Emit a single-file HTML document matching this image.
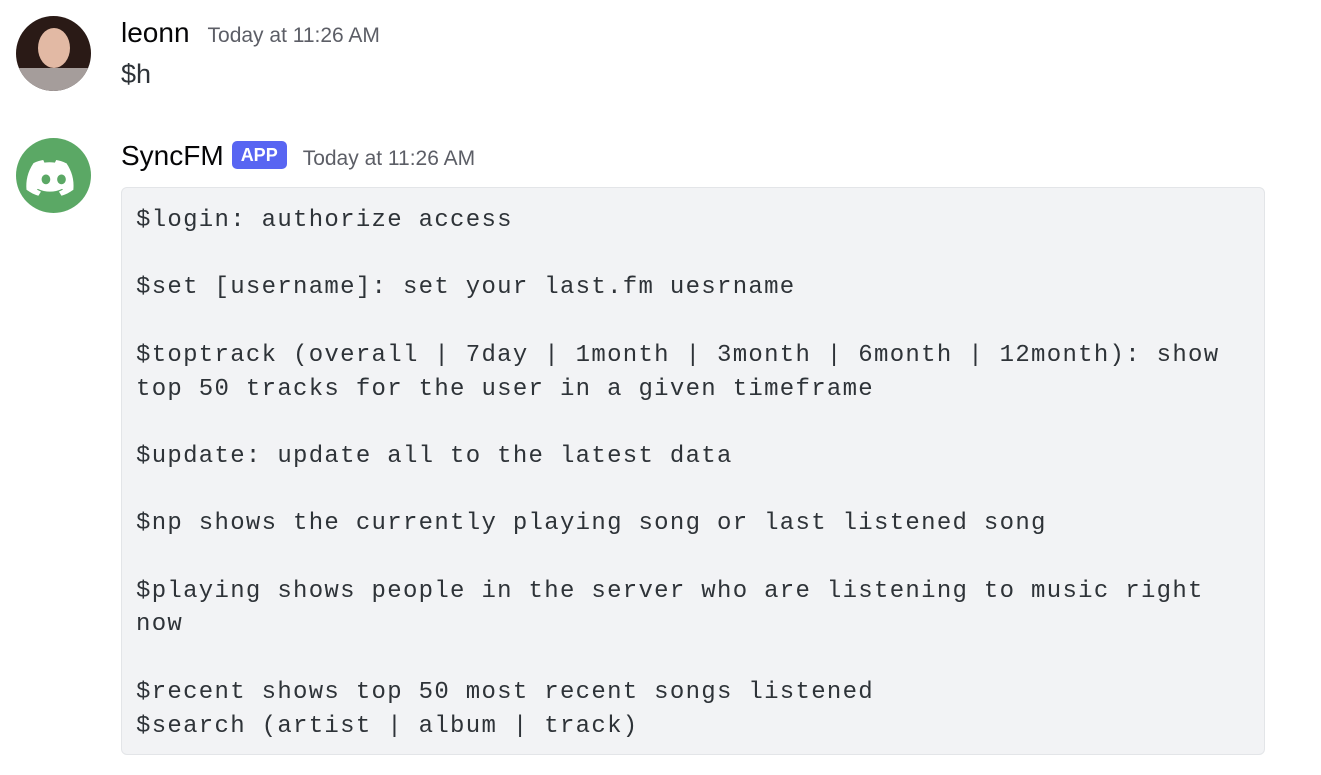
<!DOCTYPE html>
<html><head><meta charset="utf-8"><style>
body{margin:0;width:1321px;height:775px;background:#fff;font-family:"Liberation Sans",sans-serif;position:relative;overflow:hidden}
.av{position:absolute;left:16px;width:75px;height:75px;border-radius:50%;overflow:hidden}
.name{position:absolute;left:121px;font-size:28px;color:#060607;white-space:nowrap}
.ts{font-size:21px;color:#5c5e66;margin-left:18px}
.app{display:inline-block;background:#5865f2;color:#fff;font-size:18px;font-weight:bold;padding:0 9px;border-radius:5px;vertical-align:4px;margin-left:8px;line-height:28px}
.code{position:absolute;left:121px;top:187px;width:1144px;height:568px;background:#f2f3f5;border:1px solid #e3e5e8;border-radius:6px;box-sizing:border-box}
pre{margin:0;position:absolute;left:14px;top:16px;font-family:"Liberation Mono",monospace;font-size:24px;letter-spacing:1.3px;line-height:33.7px;color:#2e3338}
</style></head><body>
<div class="av" style="top:16px;background:#2a1a16;">
<div style="position:absolute;left:22px;top:12px;width:32px;height:40px;border-radius:50%;background:#e2b9a4"></div>
<div style="position:absolute;left:0;top:52px;width:75px;height:30px;background:#a59d9b"></div>
</div>
<div class="name" style="top:17px">leonn<span class="ts">Today at 11:26 AM</span></div>
<div style="position:absolute;left:121px;top:59px;font-size:27px;color:#2e3338">$h</div>
<div class="av" style="top:138px;background:#5ba865;">
<svg width="75" height="75" viewBox="0 0 75 75"><g transform="translate(37.5,37.5) scale(1.08) translate(-37.5,-38.5)"><path fill="#fff" d="M49 27c-3-1.4-6-2.3-9-2.8l-1.2 2.4c-3.3-.5-6.5-.5-9.7 0L28 24.2c-3 .5-6 1.4-9 2.8-5.7 8.4-7.2 16.6-6.5 24.7 3.8 2.8 7.4 4.5 11 5.6l2.4-3.9c-1.3-.5-2.6-1.1-3.8-1.8l.9-.7c7.3 3.4 15.2 3.4 22.4 0l.9.7c-1.2.7-2.5 1.3-3.8 1.8l2.4 3.9c3.6-1.1 7.2-2.8 11-5.6.9-9.4-1.6-17.6-6.5-24.7zM30.5 46.6c-2.2 0-4-2-4-4.5s1.8-4.5 4-4.5 4 2 4 4.5-1.8 4.5-4 4.5zm14.4 0c-2.2 0-4-2-4-4.5s1.8-4.5 4-4.5 4 2 4 4.5-1.8 4.5-4 4.5z"/></g></svg></div>
<div class="name" style="top:140px">SyncFM<span class="app">APP</span><span class="ts" style="margin-left:16px">Today at 11:26 AM</span></div>
<div class="code"><pre>$login: authorize access

$set [username]: set your last.fm uesrname

$toptrack (overall | 7day | 1month | 3month | 6month | 12month): show
top 50 tracks for the user in a given timeframe

$update: update all to the latest data

$np shows the currently playing song or last listened song

$playing shows people in the server who are listening to music right
now

$recent shows top 50 most recent songs listened
$search (artist | album | track)</pre></div>
</body></html>
